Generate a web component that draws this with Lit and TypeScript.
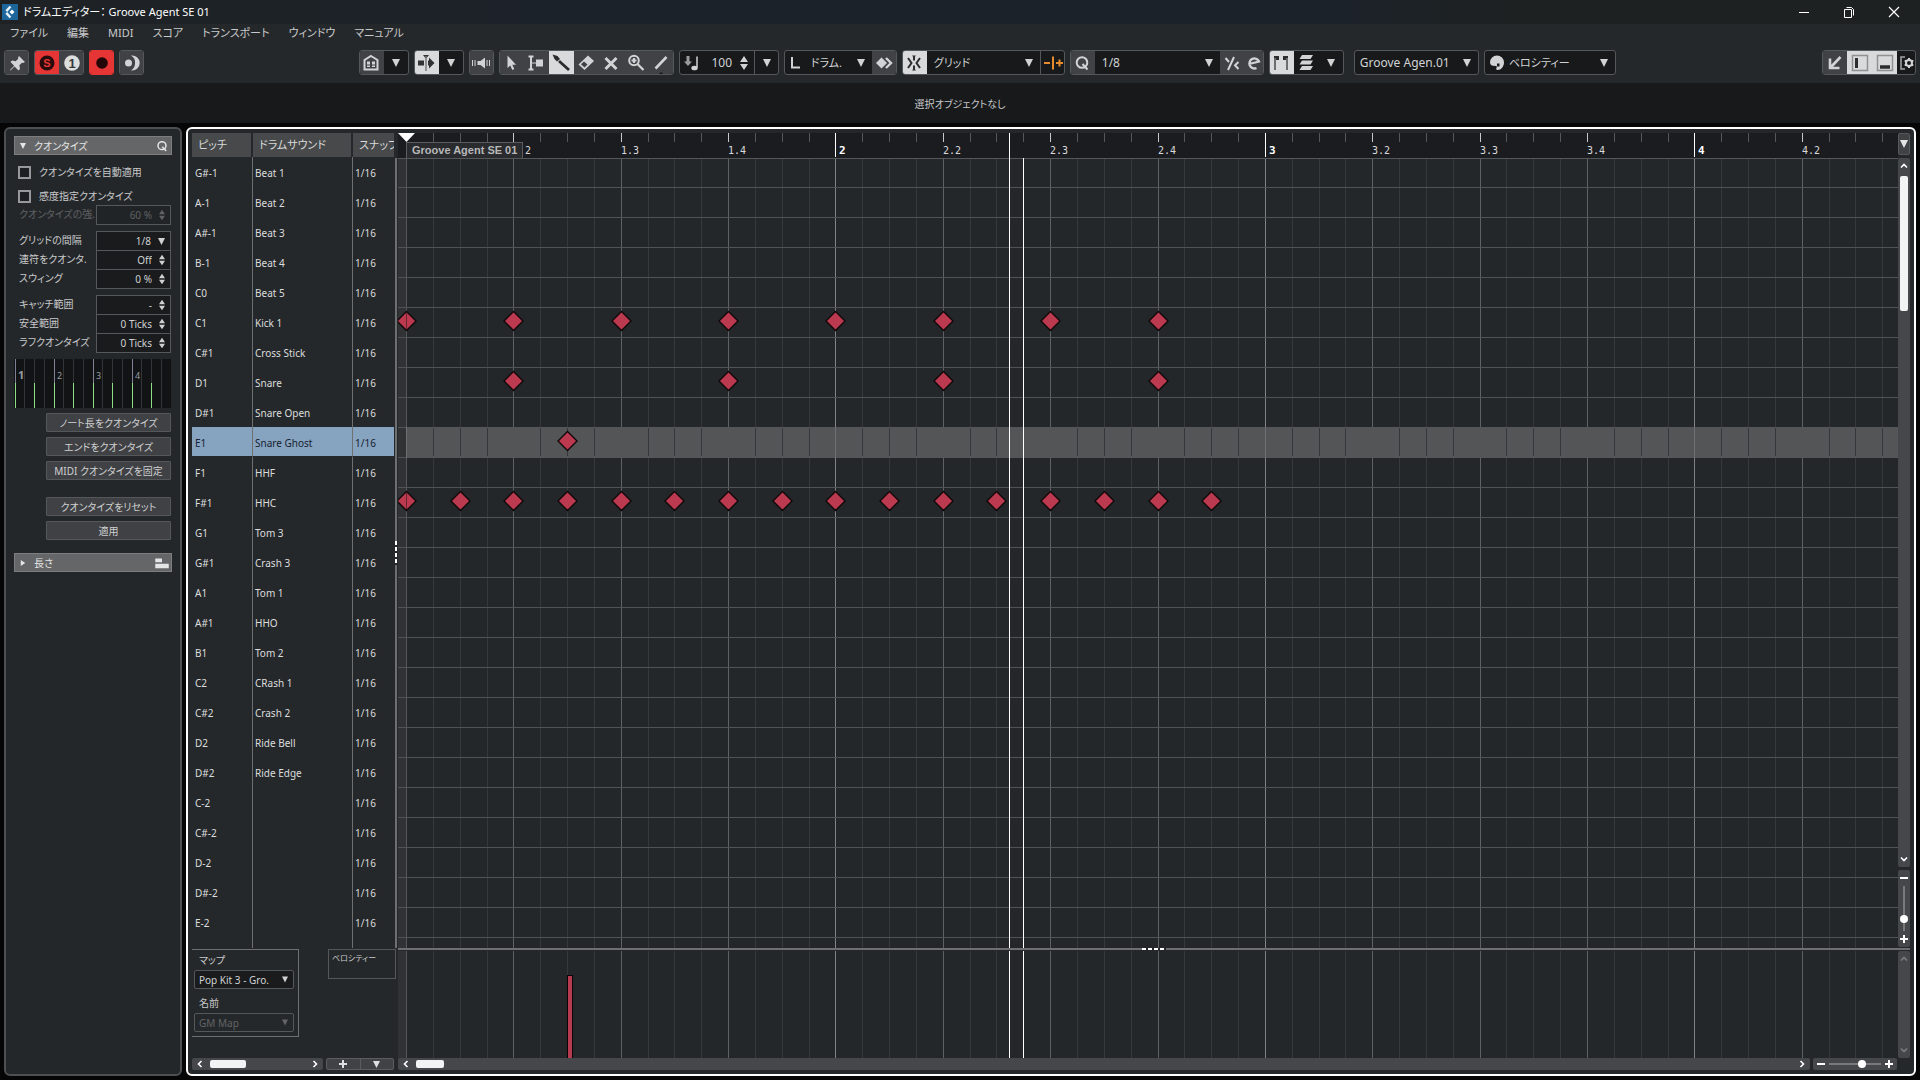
import { LitElement, html, svg, css, nothing, type TemplateResult, type SVGTemplateResult } from "lit";
import { customElement, property, state } from "lit/decorators.js";
import { classMap } from "lit/directives/class-map.js";

/* ---------- shared metrics of the time axis ---------- */
const ORIGIN = 8.5;
const BAR = 429.45;
const ROW = 30;
const stepX = (sixteenth: number) => Math.floor(ORIGIN + (BAR / 16) * sixteenth);
const CURSORS = { play: 611, edit: 625 };
const SELECTED = 9;

const DRUMS: [string, string][] = [
  ["G#-1", "Beat 1"], ["A-1", "Beat 2"], ["A#-1", "Beat 3"], ["B-1", "Beat 4"], ["C0", "Beat 5"],
  ["C1", "Kick 1"], ["C#1", "Cross Stick"], ["D1", "Snare"], ["D#1", "Snare Open"], ["E1", "Snare Ghost"],
  ["F1", "HHF"], ["F#1", "HHC"], ["G1", "Tom 3"], ["G#1", "Crash 3"], ["A1", "Tom 1"], ["A#1", "HHO"],
  ["B1", "Tom 2"], ["C2", "CRash 1"], ["C#2", "Crash 2"], ["D2", "Ride Bell"], ["D#2", "Ride Edge"],
  ["C-2", ""], ["C#-2", ""], ["D-2", ""], ["D#-2", ""], ["E-2", ""],
];

/* row index -> sixteenth positions */
const NOTES: [number, number[]][] = [
  [5, [0, 4, 8, 12, 16, 20, 24, 28]],
  [7, [4, 12, 20, 28]],
  [9, [6]],
  [11, [0, 2, 4, 6, 8, 10, 12, 14, 16, 18, 20, 22, 24, 26, 28, 30]],
];

/* ---------- icons, drawn on a 24 x 24 field ---------- */
const ICONS: Record<string, SVGTemplateResult> = {
  pin: svg`<path fill="currentColor" d="M14 5l6 6-2 1-1-.3-2.600 2.600.6 3.700-1.500 1.500-4-4L5.500 19.500 5 19l4.200-4.300-3.700-3.700L7 9.600l3.700.6 2.600-2.500-.3-1z"/>`,
  solo: svg`<circle cx="12" cy="12" r="7.500" fill="#2a0b0b"/><text class="glyph" x="12" y="16" fill="#e53935">S</text>`,
  one: svg`<circle cx="12" cy="12" r="7.800" fill="#dcdddd"/><text class="glyph big" x="12" y="17" fill="#36383a">1</text>`,
  rec: svg`<circle cx="12" cy="12" r="5.800" fill="#230708"/>`,
  moon: svg`<path fill="currentColor" d="M11 4.600a7.500 7.500 0 1 1 0 14.800 8 8 0 0 0 4-7.400 8 8 0 0 0-4-7.400z"/><circle cx="8.500" cy="12" r="3.500" fill="currentColor"/>`,
  house: svg`<path d="M12 5l6.500 4v9.500h-13V9z" fill="none" stroke="currentColor" stroke-width="2"/><path d="M8 10.500h3v3H8zM13 10.500h3v3h-3zM8 14.500h3v1.500H8zM13 14.500h3v1.500h-3z" fill="currentColor"/>`,
  scroll: svg`<path fill="#303234" d="M4 9.500h6v5H4zM14 9.500h1V6.500l5.500 5.500-5.500 5.500v-3h-1zM9 4h6l-2.400 3h-1.200z"/><path d="M12 5v15" stroke="#77797b" stroke-width="1.500"/>`,
  speaker: svg`<path fill="currentColor" d="M8.500 10h3L16 6.500v11L11.500 14h-3z"/><path d="M3.500 9v6M6 9v6M18 9v6M20.500 9v6" stroke="currentColor"/>`,
  arrow: svg`<path fill="currentColor" d="M8.500 4.500v12.500l2.800-2.500 2 4.500 2-1-2-4.200h3.700z"/>`,
  range: svg`<path d="M4.500 5.500h5M4.500 18.500h5M7 6v12" stroke="currentColor" stroke-width="2" fill="none"/><path d="M8 12h4" stroke="currentColor"/><path d="M12 8.500h7v7h-7z" fill="currentColor"/>`,
  draw: svg`<path d="M10 10l10 9" stroke="#292b2d" stroke-width="2.800"/><path d="M3.500 3.500l5 1.500 2.500 3-3 2.500-2.500-2.500z" fill="#292b2d"/>`,
  erase: svg`<path fill="currentColor" d="M14 4.500l6 5.500-9.500 9-6-5.500z"/><path d="M7 13.300l3.500 3.200 3-2.900-3.500-3.100z" fill="#3f4144"/>`,
  mute: svg`<path d="M6.500 7l11 11M17.500 7l-11 11" stroke="currentColor" stroke-width="3"/>`,
  zoom: svg`<circle cx="10" cy="9.500" r="4.800" fill="none" stroke="currentColor" stroke-width="2"/><path d="M10 7v5M7.500 9.500h5M13.500 13l6 6" stroke="currentColor" stroke-width="2.200"/>`,
  line: svg`<path d="M6.500 17.500L17.500 6" stroke="currentColor" stroke-width="2.600"/><path d="M9 24l3-3 3 3z" fill="#141516"/>`,
  noteIn: svg`<path d="M8 5v7" stroke="#9b9d9f" stroke-width="3"/><path d="M4 10.500h8l-4 4.500z" fill="#9b9d9f"/><path d="M17 5.500v11" stroke="currentColor" stroke-width="1.500"/><ellipse cx="14.500" cy="17" rx="3.200" ry="2.300" fill="currentColor"/>`,
  corner: svg`<path d="M7 6v10.500h8" stroke="currentColor" stroke-width="2" fill="none"/>`,
  diamonds: svg`<path fill="currentColor" d="M9.500 6.500l5.500 5.500-5.500 5.500L4 12z"/><path d="M14 7l5 5-5 5" stroke="currentColor" stroke-width="2.400" fill="none"/>`,
  snap: svg`<path d="M12 5v4.500M12 14.500V19M6 7l3.500 5L6 17M18 7l-3.500 5 3.500 5" stroke="#2b2d2f" stroke-width="2" fill="none"/><path d="M10 4.500h4l-2 2.500zM10 19.500h4L12 17z" fill="#2b2d2f"/>`,
  offset: svg`<path d="M3 12h6M15 12h7M18.500 8.500v7M12 5.500v13" stroke="#e88b2e" stroke-width="2"/>`,
  q: svg`<circle cx="12" cy="11.500" r="5.300" fill="none" stroke="currentColor" stroke-width="2"/><path d="M12.500 13l5 5.500" stroke="currentColor" stroke-width="2"/>`,
  triplet: svg`<path d="M5.500 7l3.500 4M14 6l-6 13" stroke="currentColor" stroke-width="2" fill="none"/><path d="M18.500 11l-3.500 3.300 3.500 3.700" stroke="currentColor" stroke-width="2" fill="none"/>`,
  e: svg`<path d="M7 13l10-2.500a5 5 0 1 0-2.500 6.500" stroke="currentColor" stroke-width="2.300" fill="none"/>`,
  gates: svg`<path d="M5 7h5M14 7h5" stroke="#2b2d2f" stroke-width="4"/><path d="M6 7v12M18 7v12" stroke="#6c6e70" stroke-width="2"/>`,
  layers: svg`<path fill="currentColor" d="M8 4h11l-2.500 4h-11zM8 9.500h11l-2.500 4h-11zM8 15h11l-2.500 4h-11z"/>`,
  palette: svg`<path fill="currentColor" d="M12 4.500a7 7 0 0 1 7 7c0 4-3 7.500-6.500 7.500-1.500 0-1.500-1.500-.8-2.500.6-1.200-.4-1.500-1.500-1.500C7 15 5 14 5 11.500a7 7 0 0 1 7-7z"/><path d="M12 12.500h2.500v3H12z" fill="#191a1c"/>`,
  arrowIn: svg`<path d="M17.500 6L8 16M7 7.500V17h9.500" stroke="currentColor" stroke-width="2.600" fill="none"/>`,
  zoneL: svg`<path d="M4.500 4.500h15v15h-15z" fill="none" stroke="#8e9092" stroke-width="1.500"/><path d="M8.500 7v10" stroke="#2b2d2f" stroke-width="3"/>`,
  zoneB: svg`<path d="M4.500 4.500h15v15h-15z" fill="none" stroke="#8e9092" stroke-width="1.500"/><path d="M7 16h10" stroke="#2b2d2f" stroke-width="3.500"/>`,
  setup: svg`<path d="M10 6H6v12h4" stroke="#a5a7a9" stroke-width="1.500" fill="none"/><circle cx="14" cy="12" r="3" fill="none" stroke="currentColor" stroke-width="2"/><path d="M14 7v2M14 15v2M9.700 9.500l1.700 1M16.600 13.500l1.700 1M9.700 14.500l1.700-1M16.600 10.500l1.700-1" stroke="currentColor" stroke-width="2"/>`,
  bars: svg`<path d="M3 6h9v5H3zM3 13h18v6H3z" fill="currentColor"/>`,
};

const icon = (name: string) => html`<svg class="icon" viewBox="0 0 24 24" aria-hidden="true">${ICONS[name]}</svg>`;
const down = html`<svg class="tri" viewBox="0 0 8 8" aria-hidden="true"><path d="M0 0h8L4 8z" fill="currentColor"/></svg>`;
const right = html`<svg class="tri" viewBox="0 0 8 8" aria-hidden="true"><path d="M1 0l6 4-6 4z" fill="currentColor"/></svg>`;
const updown = html`<svg class="updown" viewBox="0 0 8 14" aria-hidden="true"><path d="M4 0l4 6H0zM4 14l4-6H0z" fill="currentColor"/></svg>`;
const chevron = (d: string) => html`<svg class="chev" viewBox="0 0 8 8" aria-hidden="true"><path d=${d} fill="none" stroke="currentColor" stroke-width="1.6"/></svg>`;
const CHEV = { up: "M1 5.500L4 2.500l3 3", down: "M1 2.500L4 5.500l3-3", left: "M5.500 1L2.500 4l3 3", right: "M2.500 1l3 3-3 3" };

const base = css`
  * { box-sizing: border-box; }
  button, input, select {
    font: inherit; color: inherit; margin: 0; padding: 0; border: 0; background: none;
    border-radius: 0; outline: none; min-width: 0; font-feature-settings: inherit;
  }
  select { appearance: none; }
  .icon { display: block; width: 24px; height: 24px; flex: none; }
  .tri { display: block; width: 8px; height: 8px; flex: none; }
  .updown { display: block; width: 8px; height: 14px; flex: none; }
  .chev { display: block; width: 8px; height: 8px; flex: none; }
  .glyph { font: bold 11px "Liberation Sans", sans-serif; text-anchor: middle; }
  .big { font-size: 13px; }
`;

/* ---------- toolbar ---------- */
@customElement("tool-bar")
export class ToolBar extends LitElement {
  static styles = [base, css`
    :host { display: flex; gap: 5px; height: 41px; padding: 8px 4px 8px; color: #d2d3d4; font-size: 12px; line-height: 16px; }
    .group { display: flex; height: 25px; border: 1px solid #55585a; border-radius: 3px; background: #17191b; overflow: hidden; flex: none; }
    .btn { width: 25px; display: flex; align-items: center; justify-content: center; background: #404245; margin: -1px 0; flex: none; }
    .btn:first-child { margin-left: -1px; }
    .btn:last-child { margin-right: -1px; }
    .btn.narrow { width: 19px; }
    .btn.on { background: #d9dadb; }
    .btn.red { background: #e53535; }
    .btn.dark { background: none; }
    .btn.split { border-left: 1px solid #55585a; }
    .group.red { border-color: #e53535; }
    .pick { display: flex; align-items: center; padding: 0 7px; gap: 6px; }
    .pick .tri { pointer-events: none; }
    .pick select { flex: 1; width: 100%; height: 23px; }
    .jp { font-size: 11px; }
    .w-length { width: 87px; padding-left: 0; gap: 2px; }
    .w-snap { width: 113px; }
    .w-quant { width: 125px; }
    .w-part { width: 123px; padding-left: 5px; }
    .w-lane { width: 130px; padding-left: 0; gap: 0; }
    .num { display: flex; align-items: center; width: 74px; gap: 4px; }
    .num input { width: 28px; text-align: center; }
    .left { flex: 215 1 0; }
    .right { flex: 206 1 0; }
    .far { margin-left: 5px; }
  `];

  private btn(name: string, label: string, cls = "") {
    return html`<button class="btn ${cls}" aria-label=${label}>${icon(name)}</button>`;
  }
  private drop(label: string, cls = "") {
    return html`<button class="btn dark ${cls}" aria-label=${label}>${down}</button>`;
  }
  private pick(label: string, value: string, cls: string, lead?: string) {
    return html`<label class="pick ${cls}">${lead ? icon(lead) : nothing}<select aria-label=${label}><option>${value}</option></select>${down}</label>`;
  }

  render() {
    return html`
      <div class="group">${this.btn("pin", "固定")}</div>
      <div class="group">${this.btn("solo", "ソロ", "red")}${this.btn("one", "入力位置")}</div>
      <div class="group red">${this.btn("rec", "録音", "red")}</div>
      <div class="group">${this.btn("moon", "レトロスペクティブ")}</div>
      <div class="left"></div>
      <div class="group">${this.btn("house", "表示")}${this.drop("表示メニュー")}</div>
      <div class="group">${this.btn("scroll", "自動スクロール", "on")}${this.drop("スクロールメニュー")}</div>
      <div class="group">${this.btn("speaker", "試聴")}</div>
      <div class="group">
        ${this.btn("arrow", "選択")}${this.btn("range", "範囲")}${this.btn("draw", "ドラムスティック", "on")}${this.btn("erase", "削除")}${this.btn("mute", "ミュート")}${this.btn("zoom", "ズーム")}${this.btn("line", "ライン")}
      </div>
      <div class="group">
        <label class="num">${icon("noteIn")}<input aria-label="ベロシティー値" value="100">${updown}</label>${this.drop("ベロシティー値メニュー", "split")}
      </div>
      <div class="group">${this.pick("長さ", "ドラム.", "jp w-length", "corner")}${this.btn("diamonds", "ドラム表示")}</div>
      <div class="group">${this.btn("snap", "スナップ", "on")}${this.pick("スナップ", "グリッド", "jp w-snap")}${this.btn("offset", "オフセット", "dark split")}</div>
      <div class="group">${this.btn("q", "クオンタイズ")}${this.pick("クオンタイズ値", "1/8", "w-quant")}${this.btn("triplet", "ソフト")}${this.btn("e", "設定", "narrow")}</div>
      <div class="group">${this.btn("gates", "境界", "on")}${this.btn("layers", "レイヤー", "dark")}${this.drop("レイヤーメニュー")}</div>
      <div class="group far">${this.pick("パート", "Groove Agen.01", "w-part")}</div>
      <div class="group">${this.pick("カラー", "ベロシティー", "jp w-lane", "palette")}</div>
      <div class="right"></div>
      <div class="group">${this.btn("arrowIn", "下ゾーンで開く")}${this.btn("zoneL", "左ゾーン", "on")}${this.btn("zoneB", "下ゾーン", "on")}${this.btn("setup", "設定", "dark narrow")}</div>
    `;
  }
}

/* ---------- quantize inspector ---------- */
type Field = { id: string; label: string; value: string; kind?: "drop"; off?: boolean };

@customElement("quantize-inspector")
export class QuantizeInspector extends LitElement {
  static styles = [base, css`
    :host { display: flex; flex-direction: column; padding: 7px 8px; border: 2px solid #4d4f51; border-radius: 6px; background: #24272a; color: #c9cacb; font-size: 10px; line-height: 14px; }
    .head { display: flex; align-items: center; gap: 8px; height: 19px; padding: 0 0 0 5px; border: 1px solid #7b7d7e; background: #646667; color: #e4e5e5; text-align: left; }
    .head .name { flex: 1; }
    .head .icon { width: 18px; height: 18px; }
    .head .tri { width: 6px; height: 6px; }
    .check { display: flex; align-items: center; gap: 8px; height: 24px; padding-left: 4px; }
    .check input { appearance: none; width: 13px; height: 13px; border: 2px solid #96989a; background: #1d1f21; }
    .checks { padding-top: 5px; height: 50px; }
    .rows { display: flex; flex-direction: column; margin-bottom: 7px; padding: 0 1px 0 5px; }
    .row { display: flex; align-items: stretch; height: 19px; }
    .row label { flex: 1; line-height: 19px; white-space: nowrap; }
    .box { display: flex; align-items: center; gap: 7px; width: 75px; padding-right: 5px; border: 1px solid #55585a; background: #191b1d; color: #d0d1d2; margin-bottom: -1px; flex: none; }
    .box input, .box select { flex: 1; width: 100%; text-align: right; text-align-last: right; }
    .box .updown { height: 12px; width: 6px; }
    .box .tri { width: 7px; height: 7px; }
    .off { color: #5f6163; }
    .off .box { color: #5f6163; background: #212427; }
    .mini { display: block; width: 157px; height: 49px; background: #111315; margin-bottom: 5px; }
    .mini text { font: 9px "Noto Sans", sans-serif; fill: #9a9ca2; }
    .mini .first { font-weight: 700; font-size: 11px; }
    .actions { display: flex; flex-direction: column; gap: 5px; padding: 0 1px 0 32px; }
    .actions button { height: 19px; border: 1px solid #55585a; border-radius: 1px; background: #3f4144; color: #cfd0d1; }
    .actions .gap { margin-top: 12px; }
    .second { margin-top: 13px; }
  `];

  private groups: Field[][] = [
    [{ id: "strength", label: "クオンタイズの強.", value: "60 %", off: true }],
    [
      { id: "grid", label: "グリッドの間隔", value: "1/8", kind: "drop" },
      { id: "tuplet", label: "連符をクオンタ.", value: "Off" },
      { id: "swing", label: "スウィング", value: "0 %" },
    ],
    [
      { id: "catch", label: "キャッチ範囲", value: "-" },
      { id: "safe", label: "安全範囲", value: "0 Ticks" },
      { id: "rough", label: "ラフクオンタイズ", value: "0 Ticks" },
    ],
  ];

  private row(f: Field) {
    return html`<div class=${classMap({ row: true, off: !!f.off })}>
      <label for=${f.id}>${f.label}</label>
      <span class="box">${f.kind === "drop"
        ? html`<select id=${f.id}><option>${f.value}</option></select>${down}`
        : html`<input id=${f.id} .value=${f.value} ?disabled=${f.off}>${updown}`}</span>
    </div>`;
  }

  render() {
    return html`
      <button class="head">${down}<span class="name">クオンタイズ</span>${icon("q")}</button>
      <div class="checks">
        <label class="check"><input type="checkbox">クオンタイズを自動適用</label>
        <label class="check"><input type="checkbox">感度指定クオンタイズ</label>
      </div>
      ${this.groups.map(g => html`<div class="rows">${g.map(f => this.row(f))}</div>`)}
      <svg class="mini" viewBox="0 0 157 49" shape-rendering="crispEdges" aria-hidden="true">
        ${Array.from({ length: 16 }, (_, i) => {
          const x = Math.floor(1 + i * 9.75);
          const beat = i % 4 === 0;
          return svg`<path d="M${x}.5 0V49" stroke=${beat ? "#80829a" : "#333638"}/>
            ${i % 2 ? nothing : svg`<path d="M${x}.5 24V49" stroke="#8fdc86"/>`}
            ${beat ? svg`<text class=${i ? "" : "first"} x=${x + 3} y="20">${i / 4 + 1}</text>` : nothing}`;
        })}
      </svg>
      <div class="actions">
        <button>ノート長をクオンタイズ</button>
        <button>エンドをクオンタイズ</button>
        <button>MIDI クオンタイズを固定</button>
        <button class="gap">クオンタイズをリセット</button>
        <button>適用</button>
      </div>
      <button class="head second">${right}<span class="name">長さ</span>${icon("bars")}</button>
    `;
  }
}

/* ---------- drum list ---------- */
@customElement("drum-list")
export class DrumList extends LitElement {
  static styles = [base, css`
    :host { display: block; overflow: hidden; }
    table { width: 202px; height: 100%; border-collapse: separate; border-spacing: 0; table-layout: fixed; color: #dcdddd; font-size: 10px; }
    .c1 { width: 61px; }
    .c2 { width: 100px; }
    th { height: 24px; padding: 0 0 0 6px; background: #47494b; border-right: 2px solid #25282b; color: #d8d9d9; font-size: 11px; font-weight: 400; line-height: 16px; text-align: left; white-space: nowrap; overflow: hidden; }
    th:last-child { border-right: 0; }
    td { height: 30px; padding: 2px 0 0 3px; border-right: 1px solid #6d6f71; line-height: 16px; }
    td + td { padding-left: 2px; }
    td:last-child { border-right: 0; }
    .selected td { background: #86a3c0; color: #16222e; border-bottom: 1px solid #25282b; }
    .fill td { height: auto; }
  `];
  render() {
    return html`<table>
      <colgroup><col class="c1"><col class="c2"><col></colgroup>
      <thead><tr><th scope="col">ピッチ</th><th scope="col">ドラムサウンド</th><th scope="col">スナップ</th></tr></thead>
      <tbody>
        ${DRUMS.map(([pitch, name], i) => html`<tr class=${classMap({ selected: i === SELECTED })}><td>${pitch}</td><td>${name}</td><td>1/16</td></tr>`)}
        <tr class="fill"><td></td><td></td><td></td></tr>
      </tbody>
    </table>`;
  }
}

/* ---------- time canvas: ruler, note grid or velocity lane ---------- */
@customElement("time-canvas")
export class TimeCanvas extends LitElement {
  @property() kind: "ruler" | "grid" | "lane" = "grid";
  @state() private steps: number[] = [];

  private observer = new ResizeObserver(() => this.measure());

  connectedCallback() {
    super.connectedCallback();
    this.observer.observe(this);
  }
  disconnectedCallback() {
    super.disconnectedCallback();
    this.observer.disconnect();
  }
  firstUpdated() {
    this.measure();
  }
  /* only the sixteenths that fall inside the visible width are drawn */
  private measure() {
    const count = Math.max(0, Math.floor((this.clientWidth - ORIGIN) / (BAR / 16)) + 1);
    if (count !== this.steps.length) this.steps = Array.from({ length: count }, (_, i) => i);
  }

  static styles = [base, css`
    :host { display: block; position: relative; overflow: hidden; min-width: 0; min-height: 0; background: #24272a; }
    :host([kind="ruler"]) { background: #1b1c20; }
    svg { position: absolute; width: 100%; height: 100%; }
    .beat { font: 10px "DejaVu Sans Mono", monospace; fill: #d9dadb; }
    .bar { font: bold 11px "DejaVu Sans Mono", monospace; fill: #fff; }
    .part { position: absolute; left: 8px; bottom: 0; height: 16px; padding: 0 5px; border: 1px solid #5a5c5e; border-bottom: 0; background: #2a2b2e; color: #b7b8b9; font: bold 11px/15px "Liberation Sans", sans-serif; white-space: nowrap; }
  `];

  private ruler() {
    return html`<svg shape-rendering="crispEdges">
      ${this.steps.map(i => {
        const x = stepX(i);
        if (i % 16 === 0) return i === 0 ? nothing : svg`<path d="M${x}.5 0V24" stroke="#fff"/><text class="bar" x=${x + 4} y="21">${i / 16 + 1}</text>`;
        if (i % 4 === 0) return svg`<path d="M${x}.5 0V9" stroke="#c8c9ca"/><text class="beat" x=${x} y="21">${Math.floor(i / 16) + 1}.${(i / 4) % 4 + 1}</text>`;
        return svg`<path d="M${x}.5 0V9" stroke="#55575a"/>`;
      })}
      <path d="M0 0h17L8.500 9z" fill="#fff" shape-rendering="auto"/>
      <path d="M${CURSORS.play}.5 0V25" stroke="#fff"/>
    </svg><span class="part">Groove Agent SE 01</span>`;
  }

  private lines() {
    return svg`<rect width="8" height="100%" fill="#303234"/>
      ${this.steps.map(i => {
        const c = i % 16 === 0 ? (i ? "#808284" : "#55585a") : i % 4 === 0 ? "#5e6163" : "#36393c";
        return svg`<line x1="${stepX(i)}.5" x2="${stepX(i)}.5" y1="0" y2="100%" stroke=${c}/>`;
      })}`;
  }

  private cursors() {
    return svg`<line x1="${CURSORS.play}.5" x2="${CURSORS.play}.5" y1="0" y2="100%" stroke="#fff"/>
      <line x1="${CURSORS.edit}.5" x2="${CURSORS.edit}.5" y1="0" y2="100%" stroke="#fff"/>`;
  }

  private grid() {
    const top = SELECTED * ROW - 1;
    return html`<svg shape-rendering="crispEdges">
      ${this.lines()}
      <line x1="0" x2="100%" y1="0.5" y2="0.5" stroke="#55585a"/>
      ${DRUMS.map((_, i) => svg`<line x1="0" x2="100%" y1=${i * ROW + 29.5} y2=${i * ROW + 29.5} stroke="#505355"/>`)}
      <rect x="8" y=${top} width="100%" height="31" fill="#535556"/>
      ${this.steps.map(i => i % 16 === 0
        ? svg`<path d="M${stepX(i)}.5 ${top}v31" stroke="#6d6f70"/>`
        : i % 4 ? svg`<path d="M${stepX(i)}.5 ${top + 1}v28" stroke="#35383a"/>` : nothing)}
      ${NOTES.map(([row, cells]) => cells.map(c => svg`<path d="M${stepX(c)}.5 ${row * ROW + 3}.5l9.500 9.500-9.500 9.500-9.500-9.500z" fill="#bb3a50" stroke="#120709" stroke-width="1.400" shape-rendering="auto"/>
        ${c === 0 ? svg`<path d="M${stepX(0)}.5 ${row * ROW + 5}v16" stroke="#6b2430"/>` : nothing}`))}
      ${this.cursors()}
    </svg>`;
  }

  private lane() {
    return html`<svg shape-rendering="crispEdges">
      ${this.lines()}
      <rect x=${stepX(6)} y="24" width="6" height="100%" fill="#0c0506"/>
      <rect x=${stepX(6) + 1} y="25" width="4" height="100%" fill="#b43b50"/>
      ${this.cursors()}
    </svg>`;
  }

  render(): TemplateResult {
    return this.kind === "ruler" ? this.ruler() : this.kind === "lane" ? this.lane() : this.grid();
  }
}

/* ---------- application window ---------- */
@customElement("app-root")
export class AppRoot extends LitElement {
  static styles = [base, css`
    :host { display: flex; flex-direction: column; height: 100vh; overflow: hidden; background: #060607; color: #c8c9ca; font: 11px/16px "Noto Sans", "Noto Sans CJK JP", sans-serif; font-feature-settings: "palt"; }
    .title { display: flex; align-items: center; gap: 5px; height: 24px; padding: 0 4px 0 2px; background: linear-gradient(90deg, #1e2225, #1b222a 40%, #1b222a 68%, #1e2121 80%); color: #fff; flex: none; }
    .title .name { flex: 1; white-space: pre; }
    .logo { width: 16px; height: 16px; display: block; }
    .win { display: flex; }
    .win button { width: 45px; height: 22px; display: flex; align-items: center; justify-content: center; }
    .win svg { width: 12px; height: 12px; display: block; }
    .shell { background: #25282b; flex: none; }
    .menu { display: flex; gap: 19px; height: 18px; padding-left: 10px; }
    .menu button { line-height: 18px; white-space: nowrap; }
    .info { height: 40px; padding-top: 1px; background: #17191b; font-size: 10px; line-height: 40px; text-align: center; flex: none; }
    .work { flex: 1; display: flex; gap: 4px; padding: 4px; min-height: 0; }
    .side { width: 178px; flex: none; }
    .editor { flex: 1; min-width: 0; display: grid; grid-template-columns: 202px 4px 1fr 12px; grid-template-rows: 25px 1fr 3px 107px 12px; padding: 4px; border: 2px solid #fff; border-radius: 6px; background: #25282b; }
    .list { grid-area: 1 / 1 / 3 / 2; min-height: 0; }
    .vsplit { grid-area: 2 / 2 / 3 / 3; border: solid #6d6f71; border-width: 0 0 0 2px; margin-left: 1px; display: flex; align-items: center; }
    .vgrip { width: 2px; height: 24px; margin-left: -2px; background: repeating-linear-gradient(#fff 0 4px, #25282b 4px 6px); }
    .corner { grid-area: 1 / 4 / 2 / 5; height: 22px; border: 1px solid #55585a; border-radius: 2px; background: #404245; display: flex; align-items: center; justify-content: center; color: #e3e4e4; }
    .grid-canvas { grid-column: 3; grid-row: 2; }
    .ruler { grid-column: 3; grid-row: 1; }
    .hsplit { grid-area: 3 / 3 / 4 / 5; display: flex; justify-content: center; border-bottom: 1px solid #25282b; background: #6d6f71; }
    .hgrip { width: 24px; height: 2px; background: repeating-linear-gradient(90deg, #fff 0 4px, #25282b 4px 6px); }
    .lane { grid-column: 3; grid-row: 4; }
    .rail { grid-column: 4; grid-row: 2; display: flex; flex-direction: column; gap: 3px; min-height: 0; padding-bottom: 1px; }
    .bar { display: flex; align-items: center; background: #45474a; color: #fff; border-radius: 2px; min-width: 0; }
    .bar button { display: flex; align-items: center; justify-content: center; flex: none; }
    .v { flex-direction: column; }
    .v button { width: 12px; height: 16px; }
    .h button { height: 12px; width: 16px; }
    .h .track { flex: 1; display: flex; align-items: center; }
    .v .track { flex: 1; display: flex; justify-content: center; }
    .thumb { background: #f2f3f4; border-radius: 2px; }
    .scroll-y { flex: 1; min-height: 0; }
    .scroll-y .thumb { width: 8px; height: 135px; margin-top: 2px; }
    .scroll-lane { grid-area: 4 / 4 / 5 / 5; justify-content: space-between; color: #7b7d7f; }
    .zoom-y { height: 77px; flex: none; }
    .zoom-y input { writing-mode: vertical-lr; width: 12px; height: 45px; flex: none; }
    .zoom-x { width: 84px; }
    .zoom-x input { flex: 1; width: 52px; height: 12px; }
    input[type="range"] { appearance: none; }
    input[type="range"]::-webkit-slider-thumb { appearance: none; width: 8px; height: 8px; border-radius: 50%; background: #fff; }
    .zoom-x input::-webkit-slider-runnable-track { background: linear-gradient(#77797b, #77797b) center / 100% 2px no-repeat; }
    .zoom-y input::-webkit-slider-runnable-track { background: linear-gradient(#77797b, #77797b) center / 2px 100% no-repeat; }
    .below { grid-area: 3 / 1 / 5 / 3; display: flex; justify-content: space-between; align-items: flex-start; padding: 1px 2px 0 0; font-size: 10px; }
    .map { width: 107px; height: 88px; padding: 3px 4px 0 2px; border: solid #6d6f71; border-width: 1px 1px 1px 0; display: flex; flex-direction: column; }
    .map label { padding-left: 5px; height: 17px; line-height: 14px; }
    .sel { display: flex; align-items: center; height: 19px; padding: 0 5px 0 4px; border: 1px solid #55585a; border-radius: 2px; background: #191b1d; color: #d2d3d4; margin-bottom: 7px; }
    .sel select { flex: 1; width: 100%; opacity: 1; }
    .sel .tri { width: 6px; height: 7px; }
    .sel.off { background: none; color: #626466; margin: 0; }
    .lane-name { width: 68px; height: 30px; padding-left: 3px; border: 1px solid #55585a; font-size: 8px; }
    .foot-left { grid-area: 5 / 1 / 6 / 2; display: flex; gap: 3px; }
    .foot-left .bar.h { flex: 1; }
    .foot-left .thumb { width: 36px; height: 8px; margin-left: 2px; }
    .presets { display: flex; width: 68px; border: 1px solid #5a5c5e; border-radius: 2px; background: #404245; color: #dedfe0; }
    .presets button { flex: 1; display: flex; align-items: center; justify-content: center; }
    .presets button + button { border-left: 1px solid #5a5c5e; }
    .presets .tri { width: 7px; height: 7px; }
    .foot-right { grid-area: 5 / 3 / 6 / 4; display: flex; gap: 3px; padding-right: 1px; }
    .foot-right .scroll-x { flex: 1; }
    .foot-right .scroll-x .thumb { width: 28px; height: 8px; margin-left: 2px; }
  `];

  private sign(d: string) {
    return html`<svg class="chev" viewBox="0 0 8 8" aria-hidden="true"><path d=${d} stroke="currentColor" stroke-width="2"/></svg>`;
  }
  private hbar(cls: string) {
    return html`<div class="bar h ${cls}">
      <button aria-label="左へ">${chevron(CHEV.left)}</button><div class="track"><div class="thumb"></div></div><button aria-label="右へ">${chevron(CHEV.right)}</button>
    </div>`;
  }

  render() {
    const minus = this.sign("M0 4h8");
    const plus = this.sign("M0 4h8M4 0v8");
    return html`
      <header class="title">
        <svg class="logo" viewBox="0 0 16 16" aria-hidden="true"><rect width="16" height="16" fill="#1d669b"/><path d="M8.500 2.500L3.500 8l5 5.500" stroke="#e7f3fa" stroke-width="2.400" fill="none" stroke-dasharray="6.200 2.400"/><path d="M10 5.500L12.500 8 10 10.500 7.500 8z" fill="#fff"/></svg>
        <span class="name">ドラムエディター： Groove Agent SE 01</span>
        <div class="win">
          <button aria-label="最小化"><svg viewBox="0 0 12 12"><path d="M1 6.500h10" stroke="#fff"/></svg></button>
          <button aria-label="元に戻す"><svg viewBox="0 0 12 12"><path d="M1.500 3.500h7v8h-7zM3.500 1.500h5l2 2v6" stroke="#fff" fill="none"/></svg></button>
          <button aria-label="閉じる"><svg viewBox="0 0 12 12"><path d="M1 1l10 10M11 1L1 11" stroke="#fff" stroke-width="1.200"/></svg></button>
        </div>
      </header>
      <div class="shell">
        <nav class="menu">
          ${["ファイル", "編集", "MIDI", "スコア", "トランスポート", "ウィンドウ", "マニュアル"].map(m => html`<button>${m}</button>`)}
        </nav>
        <tool-bar></tool-bar>
      </div>
      <div class="info">選択オブジェクトなし</div>
      <main class="work">
        <quantize-inspector class="side"></quantize-inspector>
        <section class="editor">
          <drum-list class="list"></drum-list>
          <div class="vsplit"><div class="vgrip"></div></div>
          <time-canvas class="ruler" kind="ruler"></time-canvas>
          <button class="corner" aria-label="ルーラー設定">${down}</button>
          <time-canvas class="grid-canvas" kind="grid"></time-canvas>
          <div class="rail">
            <div class="bar v scroll-y">
              <button aria-label="上へ">${chevron(CHEV.up)}</button><div class="track"><div class="thumb"></div></div><button aria-label="下へ">${chevron(CHEV.down)}</button>
            </div>
            <div class="bar v zoom-y">
              <button aria-label="縦に縮小">${minus}</button><input type="range" aria-label="縦ズーム" min="0" max="100" value="78"><button aria-label="縦に拡大">${plus}</button>
            </div>
          </div>
          <div class="hsplit"><div class="hgrip"></div></div>
          <div class="below">
            <div class="map">
              <label for="map">マップ</label>
              <span class="sel"><select id="map"><option>Pop Kit 3 - Gro.</option></select>${down}</span>
              <label for="names">名前</label>
              <span class="sel off"><select id="names" disabled><option>GM Map</option></select>${down}</span>
            </div>
            <div class="lane-name">ベロシティー</div>
          </div>
          <time-canvas class="lane" kind="lane"></time-canvas>
          <div class="bar v scroll-lane">
            <button aria-label="上へ">${chevron(CHEV.up)}</button><button aria-label="下へ">${chevron(CHEV.down)}</button>
          </div>
          <div class="foot-left">
            ${this.hbar("")}
            <div class="presets"><button aria-label="レーンを追加">${this.sign("M0 4h8M4 0v8")}</button><button aria-label="レーンメニュー">${down}</button></div>
          </div>
          <div class="foot-right">
            ${this.hbar("scroll-x")}
            <div class="bar h zoom-x">
              <button aria-label="横に縮小">${minus}</button><input type="range" aria-label="横ズーム" min="0" max="100" value="65"><button aria-label="横に拡大">${plus}</button>
            </div>
          </div>
        </section>
      </main>
    `;
  }
}
